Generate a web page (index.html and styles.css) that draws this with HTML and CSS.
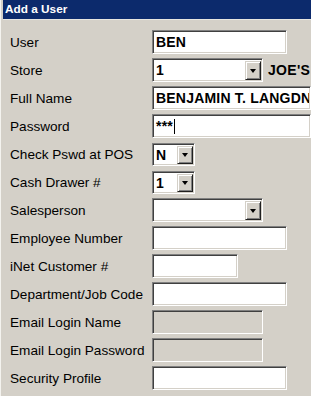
FILE: index.html
```html
<!DOCTYPE html>
<html lang="en">
<head>
    <meta charset="UTF-8">
    <meta name="viewport" content="width=device-width, initial-scale=1.0">
    <title>Add a User</title>
    <link rel="stylesheet" href="styles.css">
</head>
<body>
    <div class="window">
        <div class="titlebar">Add a User</div>
        <form class="user-form">
            <label for="user">User</label>
            <div class="cell"><input class="field wide" id="user" type="text" value="BEN"></div>

            <label>Store</label>
            <div class="cell">
                <div class="combo medium"><span class="combo-value">1</span><span class="combo-btn"></span></div>
                <span class="store-name">JOE'S</span>
            </div>

            <label for="fullname">Full Name</label>
            <div class="cell"><input class="field long" id="fullname" type="text" value="BENJAMIN T. LANGDN"></div>

            <label>Password</label>
            <div class="cell"><div class="field long">***<span class="caret"></span></div></div>

            <label>Check Pswd at POS</label>
            <div class="cell">
                <div class="combo small"><span class="combo-value">N</span><span class="combo-btn"></span></div>
            </div>

            <label>Cash Drawer #</label>
            <div class="cell">
                <div class="combo small"><span class="combo-value">1</span><span class="combo-btn"></span></div>
            </div>

            <label>Salesperson</label>
            <div class="cell">
                <div class="combo medium"><span class="combo-value"></span><span class="combo-btn"></span></div>
            </div>

            <label for="empno">Employee Number</label>
            <div class="cell"><input class="field wide" id="empno" type="text"></div>

            <label for="inet">iNet Customer #</label>
            <div class="cell"><input class="field short" id="inet" type="text"></div>

            <label for="dept">Department/Job Code</label>
            <div class="cell"><input class="field wide" id="dept" type="text"></div>

            <label for="email">Email Login Name</label>
            <div class="cell"><input class="field medium" id="email" type="text" disabled></div>

            <label for="emailpw">Email Login Password</label>
            <div class="cell"><input class="field medium" id="emailpw" type="text" disabled></div>

            <label for="security">Security Profile</label>
            <div class="cell"><input class="field wide" id="security" type="text"></div>
        </form>
    </div>
</body>
</html>
```

FILE: styles.css
```css
body {
    margin: 0;
    background-color: #d4d0c8;
    font-family: "Liberation Sans", Arial, sans-serif;
    overflow: hidden;
}
.window {
    border-left: 1px solid #f4f3ef;
    padding-left: 2px;
    height: 396px;
    box-sizing: border-box;
}
.titlebar {
    height: 19px;
    line-height: 19px;
    background-color: #0c2a6c;
    color: #ffffff;
    font-weight: bold;
    font-size: 11.8px;
    padding-left: 2px;
    border-bottom: 1px solid #e8e6e0;
}
.user-form {
    display: grid;
    grid-template-columns: 142px auto;
    grid-auto-rows: 24px;
    row-gap: 4px;
    padding: 10px 0 0 7px;
    margin: 0;
}
label {
    font-size: 13.6px;
    color: #000000;
    display: flex;
    align-items: center;
    white-space: nowrap;
}
.cell {
    display: flex;
    align-items: center;
    white-space: nowrap;
}
.field {
    box-sizing: border-box;
    height: 24px;
    margin: 0;
    padding: 0 1px 0 3px;
    background-color: #ffffff;
    border: 1px solid;
    border-color: #808080 #ffffff #ffffff #808080;
    box-shadow: inset 1px 1px #404040, inset -1px -1px #d4d0c8;
    font-family: "Liberation Sans", Arial, sans-serif;
    font-size: 14px;
    font-weight: bold;
    letter-spacing: 0.2px;
    color: #000000;
    outline: none;
    display: flex;
    align-items: center;
    flex-shrink: 0;
}
.field:disabled {
    background-color: #d4d0c8;
}
.wide { width: 135px; }
.short { width: 86px; }
.medium { width: 111px; }
.long { width: 159px; }
.caret {
    display: inline-block;
    width: 1px;
    height: 15px;
    background-color: #000000;
    margin-left: 1px;
}
.combo {
    box-sizing: border-box;
    height: 24px;
    display: flex;
    background-color: #ffffff;
    border: 1px solid;
    border-color: #808080 #ffffff #ffffff #808080;
    box-shadow: inset 1px 1px #404040, inset -1px -1px #d4d0c8;
    padding: 2px 1px 1px 2px;
    flex-shrink: 0;
}
.combo.small {
    width: 43px;
    height: 23px;
}
.combo-value {
    flex: 1;
    font-size: 14px;
    font-weight: bold;
    line-height: 19px;
    padding-left: 1px;
}
.small .combo-value {
    line-height: 18px;
}
.combo-btn {
    width: 16px;
    box-sizing: border-box;
    background-color: #d4d0c8;
    border: 1px solid;
    border-color: #d4d0c8 #202020 #202020 #d4d0c8;
    box-shadow: inset 1px 1px #ffffff, inset -1px -1px #808080;
    display: flex;
    align-items: center;
    justify-content: center;
}
.combo-btn::after {
    content: "";
    border-left: 3.5px solid transparent;
    border-right: 3.5px solid transparent;
    border-top: 4px solid #000000;
    margin-top: 1px;
}
.store-name {
    margin-left: 5px;
    font-size: 14px;
    font-weight: bold;
    letter-spacing: 0.3px;
}
```
